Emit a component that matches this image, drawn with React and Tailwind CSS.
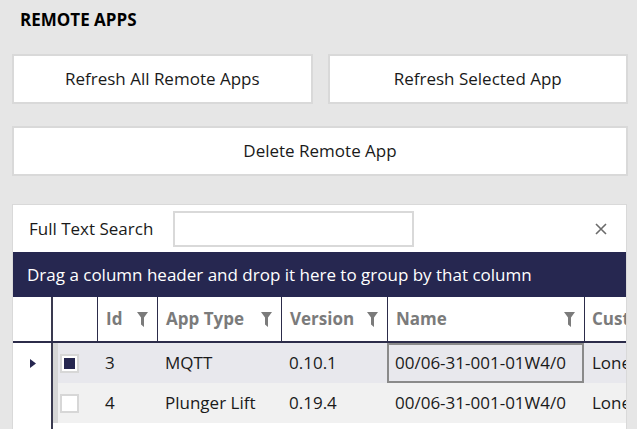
import React from "react"

const font = { fontFamily: '"Open Sans", "Noto Sans", sans-serif' }

function Funnel() {
    return (
        <svg width="11" height="15" viewBox="0 0 11 15" className="shrink-0">
            <path d="M0 0H11L7 5.5V15L4 12.5V5.5Z" fill="#7b7b7b" />
        </svg>
    )
}

function HeaderCell({ label, width }) {
    return (
        <div className={`flex h-full shrink-0 items-center justify-between border-r border-[#2c2c4a] pl-[8px] pr-[9px] ${width}`}>
            <span className="text-[17px] font-bold text-[#7b7b7b]">{label}</span>
            <Funnel />
        </div>
    )
}

function CheckBox({ checked }) {
    return (
        <div className="flex h-[19px] w-[19px] items-center justify-center border-2 border-[#d7d7d7] bg-white">
            {checked && <div className="h-[11px] w-[11px] bg-[#262750]"></div>}
        </div>
    )
}

function Row({ bg, selected, id, type, version, name, cust }) {
    return (
        <div className="flex h-[40px] text-[17px] text-[#1a1a1a] whitespace-nowrap">
            <div className="flex w-[38px] shrink-0 items-center justify-center bg-white">
                {selected && (
                    <svg width="6" height="9" viewBox="0 0 6 9" className="ml-[2px]">
                        <path d="M0 0L6 4.5L0 9Z" fill="#262750" />
                    </svg>
                )}
            </div>
            <div className="w-[2px] shrink-0 bg-[#3a3a50]"></div>
            <div className="w-[5px] shrink-0 bg-[#d6d6d6]"></div>
            <div className={`flex min-w-0 flex-1 ${bg}`}>
                <div className="flex w-[39px] shrink-0 items-center pl-[2px]">
                    <CheckBox checked={selected} />
                </div>
                <div className="flex w-[60px] shrink-0 items-center pl-[8px]">{id}</div>
                <div className="flex w-[124px] shrink-0 items-center pl-[8px]">{type}</div>
                <div className="flex w-[106px] shrink-0 items-center pl-[8px]">{version}</div>
                <div className={`flex w-[197px] shrink-0 items-center overflow-hidden ${selected ? "border-2 border-[#8a8a8a] pl-[6px]" : "pl-[8px]"}`}>{name}</div>
                <div className="flex min-w-0 flex-1 items-center overflow-hidden pl-[8px]">{cust}</div>
            </div>
        </div>
    )
}

export default function App() {
    return (
        <div className="h-[429px] w-[637px] overflow-hidden bg-[#e6e6e6]" style={font}>
            <div className="pl-[20px] pt-[8px] text-[17px] font-bold leading-[24px] text-black">REMOTE APPS</div>

            <div className="mt-[22px] flex gap-[15px] pl-[12px] pr-[9px]">
                <button className="h-[50px] flex-1 border-2 border-[#d9d9d9] bg-white text-[17px] text-[#1a1a1a]">Refresh All Remote Apps</button>
                <button className="h-[50px] flex-1 border-2 border-[#d9d9d9] bg-white text-[17px] text-[#1a1a1a]">Refresh Selected App</button>
            </div>

            <div className="mt-[22px] pl-[12px] pr-[9px]">
                <button className="h-[50px] w-full border-2 border-[#d9d9d9] bg-white text-[17px] text-[#1a1a1a]">Delete Remote App</button>
            </div>

            <div className="mt-[28px] ml-[12px] mr-[10px] border-l border-r border-t border-[#d9d9d9] bg-white">
                {/* search row */}
                <div className="flex h-[47px] items-center">
                    <span className="w-[160px] shrink-0 pl-[16px] text-[17px] text-[#1a1a1a]">Full Text Search</span>
                    <div className="h-[36px] w-[241px] shrink-0 border-2 border-[#d9d9d9] bg-white"></div>
                    <div className="flex-1"></div>
                    <svg width="12" height="12" viewBox="0 0 12 12" className="mr-[19px]">
                        <path d="M1 1L11 11M11 1L1 11" stroke="#6b6b6b" strokeWidth="1.6" />
                    </svg>
                </div>

                {/* group panel */}
                <div className="flex h-[45px] items-center bg-[#262750] pl-[14px] text-[17px] text-white whitespace-nowrap">
                    Drag a column header and drop it here to group by that column
                </div>

                {/* header row */}
                <div className="flex h-[46px] border-b-2 border-[#2c2c4a] bg-white whitespace-nowrap">
                    <div className="w-[38px] shrink-0"></div>
                    <div className="w-[2px] shrink-0 bg-[#3a3a50]"></div>
                    <div className="w-[45px] shrink-0 border-r border-[#2c2c4a]"></div>
                    <HeaderCell label="Id" width="w-[60px]" />
                    <HeaderCell label="App Type" width="w-[124px]" />
                    <HeaderCell label="Version" width="w-[106px]" />
                    <HeaderCell label="Name" width="w-[197px]" />
                    <div className="flex min-w-0 flex-1 items-center overflow-hidden pl-[7px] text-[17px] font-bold text-[#7b7b7b]">Cust</div>
                </div>

                <Row bg="bg-[#e8e8ed]" selected id="3" type="MQTT" version="0.10.1" name="00/06-31-001-01W4/0" cust="Lone" />
                <Row bg="bg-[#f1f1f1]" id="4" type="Plunger Lift" version="0.19.4" name="00/06-31-001-01W4/0" cust="Lone" />
                <div className="flex h-[10px]">
                    <div className="w-[38px] shrink-0"></div>
                    <div className="w-[2px] shrink-0 bg-[#3a3a50]"></div>
                </div>
            </div>
        </div>
    )
}
